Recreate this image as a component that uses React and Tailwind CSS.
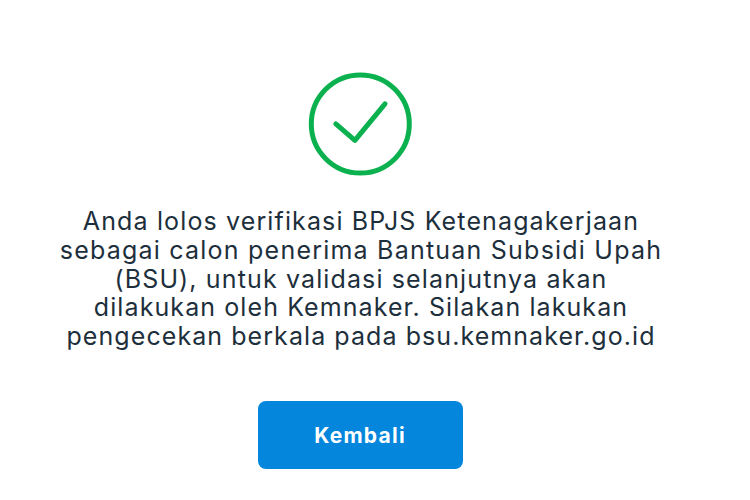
export default function App() {
  return (
    <main className="flex h-[500px] w-[750px] flex-col items-center overflow-hidden bg-white pr-[30px] font-['Inter',sans-serif]">
      <svg className="mt-[72px] h-[104px] w-[104px] shrink-0" viewBox="0 0 104 104" fill="none" stroke="#0bb14f" strokeWidth="5" aria-hidden="true">
        <circle cx="52.3" cy="52" r="49" />
        <path d="M27.8 51.8 L46.9 68.3 L77 31.8" strokeLinecap="round" strokeLinejoin="round" />
      </svg>
      <p className="mt-[31px] whitespace-nowrap pl-[2px] text-center text-[25px] leading-[28.8px] text-[#1d2f3c]">
        <span className="block tracking-[1.13px]">Anda lolos verifikasi BPJS Ketenagakerjaan</span>
        <span className="block tracking-[1.22px]">sebagai calon penerima Bantuan Subsidi Upah</span>
        <span className="block tracking-[1.13px]">(BSU), untuk validasi selanjutnya akan</span>
        <span className="block tracking-[1.09px]">dilakukan oleh Kemnaker. Silakan lakukan</span>
        <span className="block tracking-[1.07px]">pengecekan berkala pada bsu.kemnaker.go.id</span>
      </p>
      <button className="mt-[50px] h-[68px] w-[205px] shrink-0 rounded-lg bg-[#0386dc] pt-[2px] text-[21px] font-bold tracking-[1.25px] text-white">
        Kembali
      </button>
    </main>
  );
}
